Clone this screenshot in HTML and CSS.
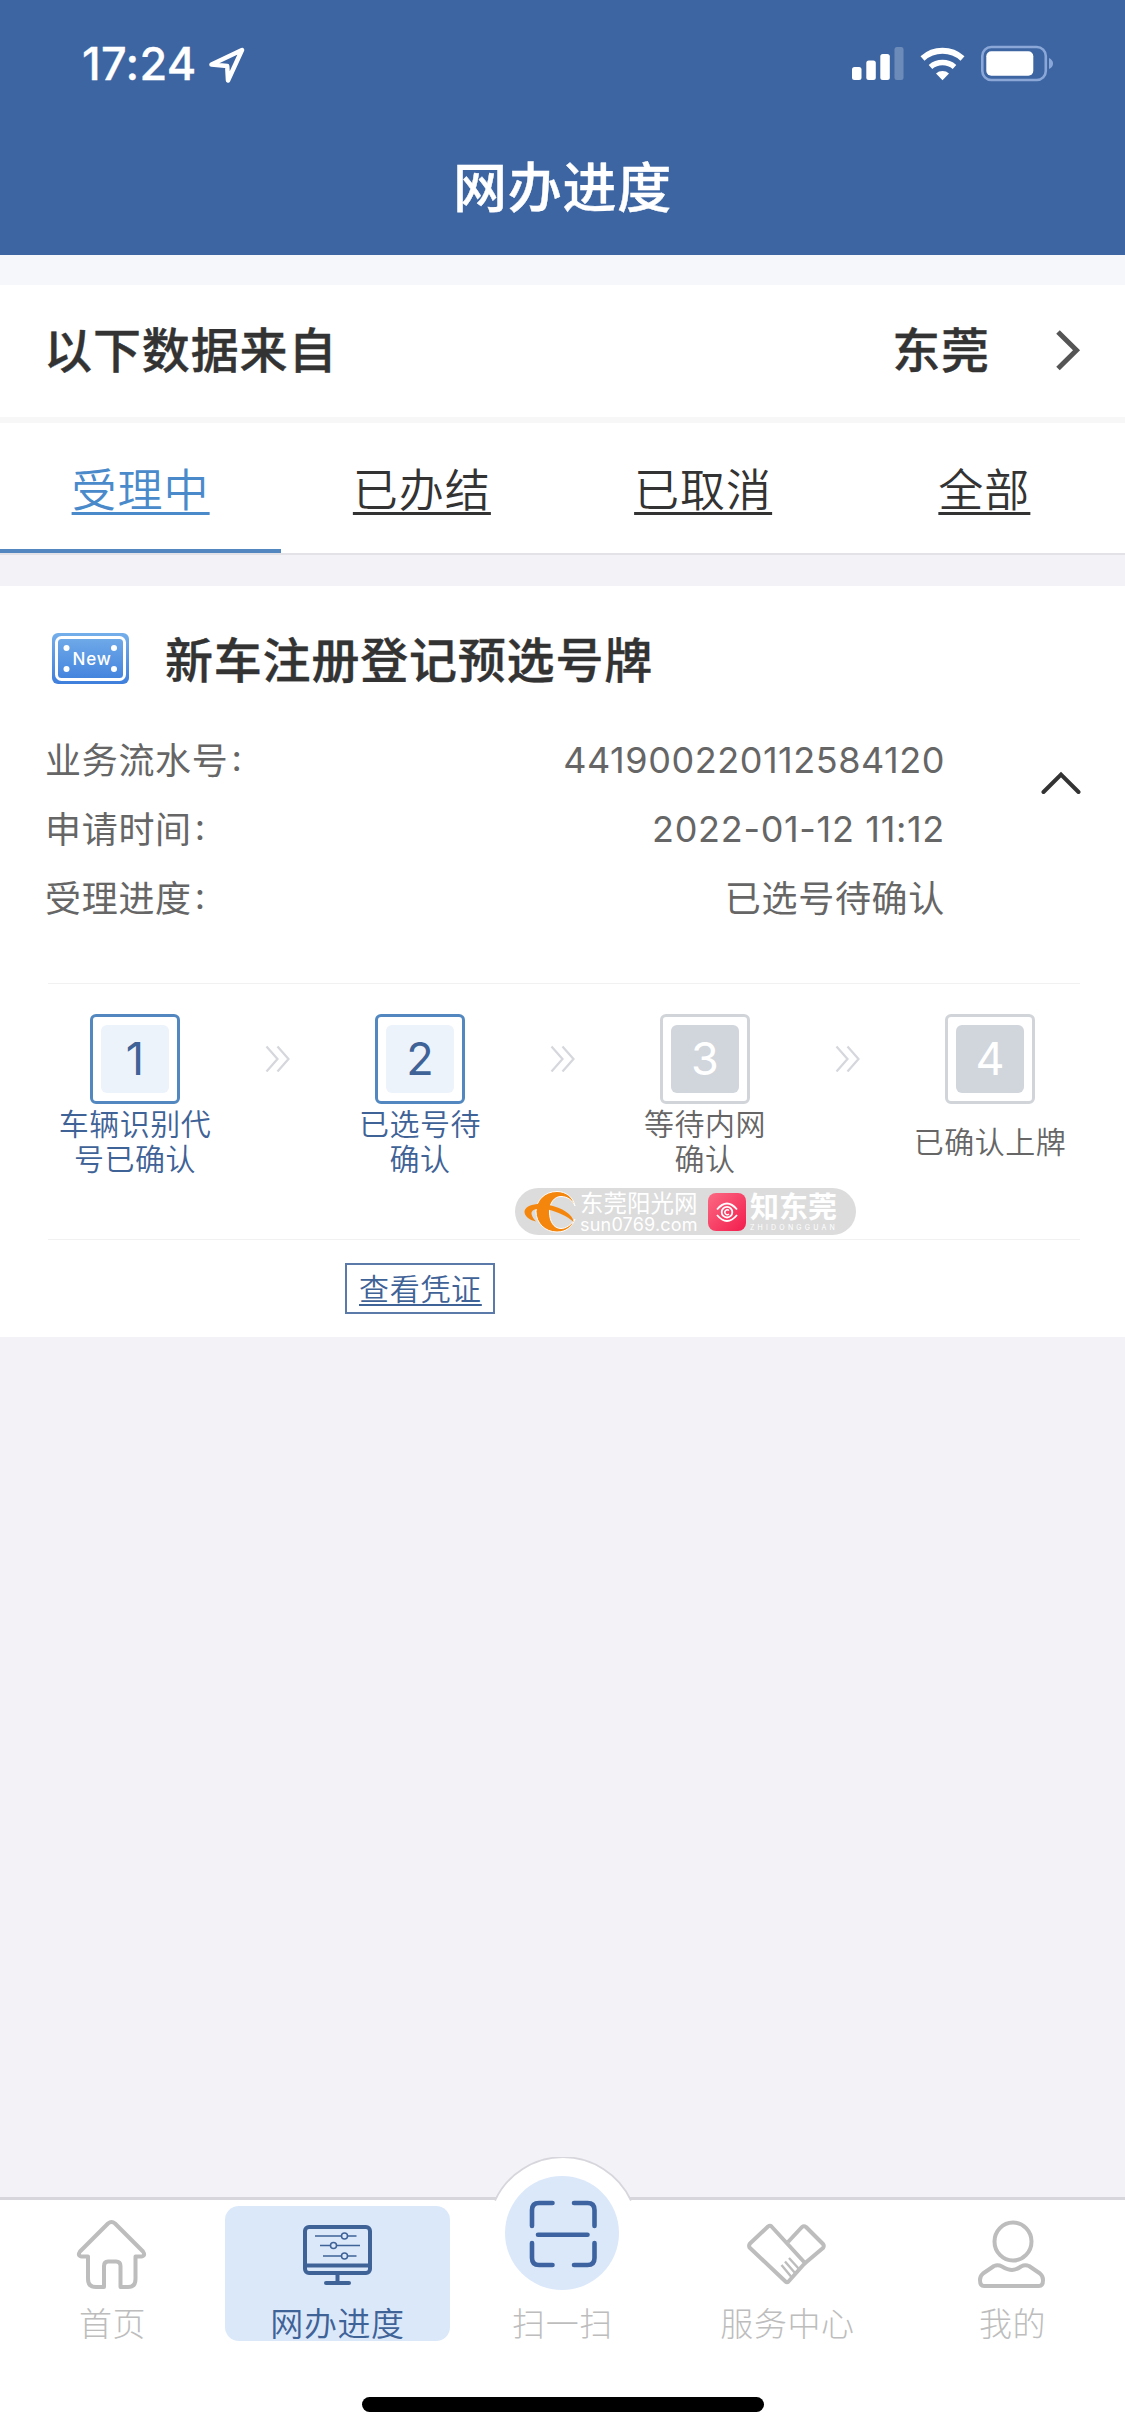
FILE: index.html
```html
<!DOCTYPE html>
<html lang="zh-CN">
<head>
<meta charset="utf-8">
<title>网办进度</title>
<link rel="stylesheet" href="styles.css">
</head>
<body>
<div class="screen">
  <header class="header">
    <div class="status">
      <div class="status-left">
        <span class="clock">17:24</span>
        <svg class="loc" width="36" height="36" viewBox="0 0 36 36"><path d="M2.500 17.500 L33 3 L19 33.500 L18.200 19 Z" fill="none" stroke="#fff" stroke-width="4.500" stroke-linejoin="round"/></svg>
      </div>
      <div class="status-right">
        <svg width="202" height="38" viewBox="852 45 202 38" fill="#fff">
          <rect x="852" y="67" width="9.500" height="13" rx="2.500"/><rect x="866.300" y="60.500" width="9.500" height="19.500" rx="2.500"/><rect x="880.300" y="54" width="9.500" height="26" rx="2.500"/><rect x="894.500" y="47" width="9" height="33" rx="2.500" opacity=".25"/>
          <path d="M922.500 58.500 A30 30 0 0 1 962.500 58.500" fill="none" stroke="#fff" stroke-width="6"/>
          <path d="M930.500 67 A18.500 18.500 0 0 1 954.500 67" fill="none" stroke="#fff" stroke-width="5.500"/>
          <path d="M936 73.500 A10 10 0 0 1 949 73.500 L942.500 80.300 Z"/>
          <rect x="982.300" y="47" width="63.500" height="33" rx="9" fill="none" stroke="#8aa7d8" stroke-width="2.600"/>
          <rect x="986.300" y="51.200" width="47" height="24.500" rx="5"/>
          <path d="M1049 58 q4 2 4 5.500 t-4 5.500z" fill="#8aa7d8"/>
        </svg>
      </div>
    </div>
    <h1 class="title">网办进度</h1>
  </header>

  <section class="source">
    <span>以下数据来自</span>
    <span class="city">东莞</span>
    <svg width="30" height="46" viewBox="0 0 30 46"><path d="M5 4 L23.500 22.300 L5 40.500" fill="none" stroke="#555" stroke-width="5"/></svg>
  </section>

  <nav class="tabs">
    <a class="tab active"><span>受理中</span></a>
    <a class="tab"><span>已办结</span></a>
    <a class="tab"><span>已取消</span></a>
    <a class="tab"><span>全部</span></a>
  </nav>

  <section class="card">
    <div class="card-head">
      <svg width="77" height="51" viewBox="0 0 77 51">
        <defs><linearGradient id="plate" x1="0" y1="0" x2="0" y2="1"><stop offset="0" stop-color="#74aeea"/><stop offset="1" stop-color="#3f7fdc"/></linearGradient></defs>
        <rect width="77" height="51" rx="6" fill="url(#plate)"/>
        <rect x="4.500" y="4.500" width="68" height="42" rx="5" fill="none" stroke="#fff" stroke-width="3"/>
        <g fill="#fff"><circle cx="14.500" cy="15" r="3"/><circle cx="62" cy="15" r="3"/><circle cx="14.500" cy="36" r="3"/><circle cx="62" cy="36" r="3"/></g>
        <text x="40" y="32" class="plate-text">New</text>
      </svg>
      <h2>新车注册登记预选号牌</h2>
    </div>
    <div class="details">
      <dl>
        <div><dt>业务流水号<span>:</span></dt><dd class="serial">441900220112584120</dd></div>
        <div><dt>申请时间<span>:</span></dt><dd class="date">2022-01-12 11:12</dd></div>
        <div><dt>受理进度<span>:</span></dt><dd>已选号待确认</dd></div>
      </dl>
      <svg class="fold" width="40" height="24" viewBox="0 0 40 24"><path d="M2.500 21 L20 3.500 L37.500 21" fill="none" stroke="#333" stroke-width="4" stroke-linecap="round"/></svg>
    </div>
    <div class="steps">
      <div class="step done"><div class="box"><b>1</b></div><p>车辆识别代<br>号已确认</p></div>
      <svg class="arrow" width="26" height="28" viewBox="0 0 26 28"><path d="M1.500 1.500 L12.500 14 L1.500 26.500 M12.500 1.500 L23.500 14 L12.500 26.500"/></svg>
      <div class="step done"><div class="box"><b>2</b></div><p>已选号待<br>确认</p></div>
      <svg class="arrow" width="26" height="28" viewBox="0 0 26 28"><path d="M1.500 1.500 L12.500 14 L1.500 26.500 M12.500 1.500 L23.500 14 L12.500 26.500"/></svg>
      <div class="step"><div class="box"><b>3</b></div><p>等待内网<br>确认</p></div>
      <svg class="arrow" width="26" height="28" viewBox="0 0 26 28"><path d="M1.500 1.500 L12.500 14 L1.500 26.500 M12.500 1.500 L23.500 14 L12.500 26.500"/></svg>
      <div class="step"><div class="box"><b>4</b></div><p>已确认上牌</p></div>
      <div class="watermark">
        <svg width="52" height="42" viewBox="0 0 52 42">
          <path d="M51 15 C49 6 42 .5 33 .5 C21 .5 12 9 12 20.500 C12 32 21 41 33 41 C42 41 48 36 51 28 C47 34 42 37.500 37 37.500 C29.500 37.500 25.500 30 25.500 21 C25.500 12 30 5.500 37 5.500 C44 5.500 49 10 51 15Z" fill="#f5860d" stroke="#fff" stroke-width="1"/>
          <path d="M.5 20 C2 14 13 11.500 25 14 C38 17 49 23 49.500 31 C43 25 34 21 24 18.500 C14 16.500 7 18 7.500 23 C8 26 10 28 12 30.500 C5 29 0 25 .5 20Z" fill="#f5860d"/>
        </svg>
        <div class="wm-site"><span>东莞阳光网</span><small>sun0769.com</small></div>
        <svg width="38" height="38" viewBox="0 0 38 38">
          <defs><linearGradient id="app" x1="0" y1="0" x2="1" y2="1"><stop offset="0" stop-color="#fb6a83"/><stop offset="1" stop-color="#f31c4c"/></linearGradient></defs>
          <rect width="38" height="38" rx="8" fill="url(#app)"/>
          <g fill="none" stroke="#fff" stroke-width="1.800"><path d="M9 16.500 Q19 4.500 29 16.500 M9 22 Q19 34 29 22"/><circle cx="19" cy="19.200" r="5.300"/></g>
          <path d="M21 17.500 a2.400 2.400 0 1 0 0 3.400" fill="none" stroke="#fff" stroke-width="1.400"/>
        </svg>
        <div class="wm-app"><span>知东莞</span><small>ZHIDONGGUAN</small></div>
      </div>
    </div>
    <div class="actions"><a class="voucher">查看凭证</a></div>
  </section>

  <main class="blank"></main>

  <footer class="tabbar">
    <div class="hump">
      <svg width="152" height="48" viewBox="0 0 152 48"><path d="M6 48 L8 43.500 A75 75 0 0 1 144 43.500 L146 48Z" fill="#fff"/><path d="M8 43.500 A75 75 0 0 1 144 43.500" fill="none" stroke="#d6d6dc" stroke-width="1.800"/></svg>
    </div>
    <a class="item"><svg width="75" height="75" viewBox="75 2217 75 75" class="line"><path d="M108 2223.500 Q111.500 2220.500 115 2223.500 L143 2251.500 Q146 2256 141 2256.500 H135.500 V2279 Q135.500 2287 128 2287 H120.500 V2266 Q120.500 2261.500 116 2261.500 H108 Q104 2261.500 104 2266 V2287 H96 Q88 2287 88 2279 V2256.500 H82 Q77 2256 80 2251.500Z"/></svg><span>首页</span></a>
    <a class="item active"><svg width="75" height="75" viewBox="300 2217 75 75" class="line"><rect x="305" y="2227" width="65" height="46" rx="4"/><path d="M305 2265.500 H370"/><path d="M337.500 2274 V2282" /><path d="M326 2283 H349" stroke-linecap="round"/><path d="M315 2236 H341 M347.500 2236 H356.500 M320 2245.500 H330 M337 2245.500 H360 M323 2256 H341 M347.500 2256 H356.500" stroke-width="1.500"/><g stroke-width="1.500"><circle cx="344.500" cy="2236" r="3"/><circle cx="333.500" cy="2245.500" r="3"/><circle cx="344.500" cy="2256" r="3"/></g></svg><span>网办进度</span></a>
    <a class="item scan"><svg width="114" height="114" viewBox="505 2176 114 114"><circle cx="562" cy="2233" r="57" fill="#dbe8fa"/><path d="M532 2226 V2210 Q532 2203 539 2203 H552.500 M574 2203 H587.500 Q594.500 2203 594.500 2210 V2226 M594.500 2243 V2258 Q594.500 2265 587.500 2265 H574 M552.500 2265 H539 Q532 2265 532 2258 V2243 M538 2234.700 H587.500" fill="none" stroke="#3d64a0" stroke-width="4.600" stroke-linecap="round"/></svg><span>扫一扫</span></a>
    <a class="item"><svg width="83" height="75" viewBox="746 2217 83 75" class="line"><path d="M768 2226.500 Q770 2225 771.500 2226.500 L805 2263 L788.500 2281.500 Q787 2283 785.500 2281.500 L749.500 2247.500 Q748.500 2245.500 750 2243.500Z"/><path d="M788 2242 L802 2227 Q804 2225.500 806 2227 L823 2244 Q824.500 2246 823 2248 L804 2264"/><path d="M789 2258 L799 2269 M785 2261.500 L795 2273 M781.500 2265 L791 2276.500" stroke-width="2.400"/></svg><span>服务中心</span></a>
    <a class="item"><svg width="75" height="75" viewBox="975 2217 75 75" class="line"><ellipse cx="1013" cy="2241.500" rx="18.500" ry="19"/><path d="M994 2266 Q998 2264.500 1002 2266.500 Q1008 2270 1012 2270 Q1016 2270 1021 2266.500 Q1025 2264.500 1029 2266 L1040 2273.500 Q1043 2276 1043 2280 Q1043 2286 1039 2286 H984 Q980 2286 980 2280 Q980 2276 983 2273.500Z"/></svg><span>我的</span></a>
    <div class="home-bar"></div>
  </footer>
</div>
</body>
</html>
```
FILE: styles.css
```css
* { box-sizing: border-box; margin: 0; padding: 0; }
body {
  width: 1125px;
  font-family: Inter, "Noto Sans CJK SC", sans-serif;
  background: #f2f2f7;
  color: #333;
}
svg { display: block; flex: none; }
.screen { display: flex; flex-direction: column; width: 1125px; height: 2436px; }

.header { height: 255px; background: #3d65a2; color: #fff; }
.status { display: flex; justify-content: space-between; height: 127px; padding: 45px 71px 0 82px; }
.status-left { display: flex; gap: 11px; }
.clock { width: 116px; font-size: 45px; line-height: 38px; font-weight: 500; letter-spacing: .3px; white-space: nowrap; -webkit-text-stroke: .3px #fff; }
.loc { margin-top: 2px; }
.title { font-size: 54px; font-weight: 500; line-height: 124px; letter-spacing: .7px; text-align: center; -webkit-text-stroke: .4px #fff; }

.source {
  display: flex; align-items: center;
  height: 168px; padding: 0 42px 0 44px;
  background: #fff; border-bottom: 6px solid #f7f7f8;
  border-top: 30px solid #f5f7fa;
  font-size: 48px; font-weight: 500; letter-spacing: .9px;
}
.source span { line-height: 60px; padding-bottom: 1px; -webkit-text-stroke: .4px #333; }
.city { margin-left: auto; margin-right: 63px; }

.tabs { display: flex; height: 132px; background: #fff; border-bottom: 2px solid #e2e2e7; }
.tab { flex: 1; height: 130px; display: flex; justify-content: center; font-size: 45px; line-height: 135px; letter-spacing: 1px; font-weight: 350; }
.tab span { text-decoration: underline; text-decoration-thickness: 3px; text-underline-offset: 5px; text-decoration-skip-ink: none; }
.tab.active { color: #4a8acb; border-bottom: 4px solid #5288bf; }

.card { height: 751px; margin-top: 31px; background: #fff; }
.card-head { display: flex; align-items: center; gap: 36px; height: 145px; padding: 0 52px; }
.card-head h2 { padding-bottom: 3px; font-size: 48px; font-weight: 500; letter-spacing: .8px; -webkit-text-stroke: .4px #333; }
.plate-text { font: 500 17px Inter, sans-serif; fill: #fff; text-anchor: middle; letter-spacing: .8px; }
.details { display: flex; align-items: flex-start; justify-content: space-between; height: 252px; margin-right: 44px; padding-left: 45px; color: #666; }
.details dl { width: 900px; padding-top: 1px; }
.details dl div { display: flex; justify-content: space-between; height: 69px; line-height: 58px; font-size: 36px; letter-spacing: .7px; }
.details dt span { position: relative; margin-left: 3px; top: -3px; }
.details .serial { letter-spacing: .54px; line-height: 57px; }
.details .date { letter-spacing: .68px; line-height: 57px; }
.fold { margin-top: 40px; }

.steps {
  position: relative; display: flex; align-items: flex-start;
  height: 257px; margin: 0 45px 0 48px; padding-top: 30px;
  border-top: 1px solid #f1f1f1; border-bottom: 1px solid #f1f1f1;
}
.step { width: 174px; display: flex; flex-direction: column; align-items: center; color: #666; flex: none; }
.box { width: 90px; height: 90px; padding: 8px; border: 3px solid #d1d4d9; border-radius: 6px; }
.box b { display: block; height: 68px; border-radius: 6px; background: #d1d5dc; color: #fff; font-size: 45px; line-height: 68px; font-weight: 400; text-align: center; }
.step p { display: grid; align-content: center; height: 76px; font-size: 30px; line-height: 35px; letter-spacing: .5px; font-weight: 350; white-space: nowrap; text-align: center; }
.done { color: #3f6297; }
.done .box { border-color: #5288bf; }
.done .box b { color: #3f6297; background: #edf3fb; }
.arrow { margin: 31px 42px 0 43px; }
.arrow path { fill: none; stroke: #d5d7dc; stroke-width: 2.2; }

.watermark {
  position: absolute; left: 467px; top: 204px; width: 341px; height: 47px;
  display: flex; align-items: center; padding-left: 9px; border-radius: 24px;
  background: #dcdcdc; color: #fff; white-space: nowrap;
}
.wm-site { width: 117px; margin: 0 11px 0 4px; padding-top: 2px; }
.wm-site span { display: block; font-size: 23.5px; line-height: 24px; height: 25px; font-weight: 400; }
.wm-site small { display: block; font-size: 18px; line-height: 15px; height: 16px; letter-spacing: .2px; }
.wm-app { margin-left: 4px; padding-top: 2px; }
.wm-app span { display: block; font-size: 29px; line-height: 30px; height: 31px; font-weight: 700; }
.wm-app small { display: block; font-size: 7px; line-height: 8px; letter-spacing: 3.2px; }

.actions { padding: 23px 0 0 345px; }
.voucher { display: block; width: 150px; height: 51px; padding-left: 12px; border: 2px solid #5c7aa9; color: #3f6297; font-size: 30px; line-height: 49px; letter-spacing: .7px; font-weight: 350; text-decoration: underline; text-decoration-thickness: 2px; text-underline-offset: 4px; text-decoration-skip-ink: none; }

.blank { flex: 1; }

.tabbar { position: relative; display: flex; flex-wrap: wrap; align-content: flex-start; height: 239px; padding-top: 6px; background: #fff; border-top: 3px solid #d6d6dc; }
.hump { position: absolute; left: 487px; top: -43px; }
.item { position: relative; width: 225px; height: 135px; display: flex; flex-direction: column; align-items: center; justify-content: flex-end; border-radius: 14px; color: #bdbdbd; font-size: 33px; font-weight: 300; letter-spacing: .6px; }
.item span { line-height: 38px; margin-top: 13px; height: 36px; }
.item.active { background: #dbe8fa; color: #3f6297; }
.item.active span { font-weight: 350; }
.scan svg { margin-right: 2px; }
.scan span { margin-top: 15px; }
.line { fill: none; stroke: currentColor; stroke-width: 4; stroke-linejoin: round; }
.home-bar { width: 402px; height: 15px; margin: 56px auto 0; border-radius: 8px; background: #000; }
```
